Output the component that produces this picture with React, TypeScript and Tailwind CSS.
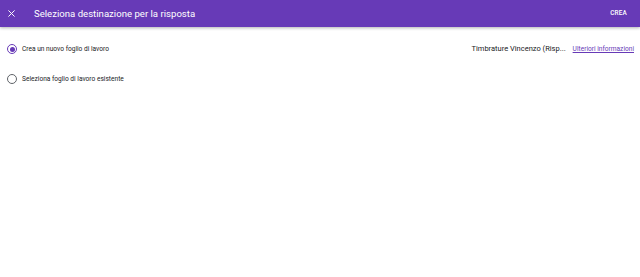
import React from "react";

export default function App() {
  return (
    <div className="w-[640px] h-[277px] bg-white overflow-hidden" style={{ fontFamily: "Roboto, 'Liberation Sans', sans-serif" }}>
      <div className="h-[27px] bg-[#673ab7] flex items-center shadow-[0_1px_3px_rgba(0,0,0,0.3)] relative z-10">
        <div className="w-[23px] pl-[8px] flex items-center">
          <svg width="7" height="7" viewBox="0 0 10 10" className="block">
            <path d="M1 1 L9 9 M9 1 L1 9" stroke="white" strokeWidth="1.4" strokeLinecap="round" />
          </svg>
        </div>
        <div className="ml-[11px] text-white text-[9.6px] leading-none">Seleziona destinazione per la risposta</div>
        <div className="ml-auto mr-[13px] text-white text-[6.4px] font-medium tracking-[0.2px] leading-none">CREA</div>
      </div>
      <div className="pt-[16px]">
        <div className="flex items-center h-[12px] pl-[7px] pr-[6px]">
          <div className="w-[10px] h-[10px] rounded-full border border-[#673ab7] flex items-center justify-center">
            <div className="w-[5px] h-[5px] rounded-full bg-[#673ab7]" />
          </div>
          <div className="ml-[5px] text-[6.6px] text-[#202124] leading-none">Crea un nuovo foglio di lavoro</div>
          <div className="ml-auto text-[7.5px] text-[#202124] leading-none">Timbrature Vincenzo (Risp...</div>
          <div className="ml-[7px] text-[6.6px] text-[#673ab7] underline leading-none">Ulteriori informazioni</div>
        </div>
        <div className="flex items-center h-[12px] pl-[7px] mt-[18px]">
          <div className="w-[10px] h-[10px] rounded-full border border-[#5f6368]" />
          <div className="ml-[5px] text-[6.6px] text-[#202124] leading-none">Seleziona foglio di lavoro esistente</div>
        </div>
      </div>
    </div>
  );
}
